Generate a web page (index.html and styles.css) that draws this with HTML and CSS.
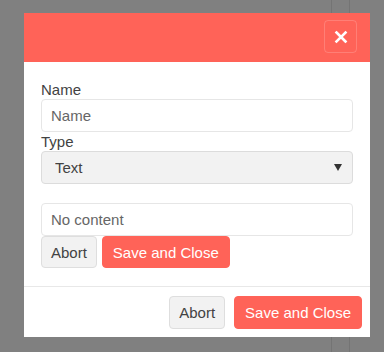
FILE: index.html
```html
<!DOCTYPE html>
<html lang="en">
<head>
  <meta charset="UTF-8" />
  <title>Edit field</title>
  <meta name="viewport" content="width=device-width, initial-scale=1.0"/>
  <link rel="stylesheet" href="styles.css">
</head>
<body>

<div class="backdrop">
  <div class="guide guide-a"></div>
  <div class="guide guide-b"></div>

  <div class="modal">
    <header class="modal-header">
      <button class="close-btn" aria-label="Close">
        <svg width="14" height="14" viewBox="0 0 14 14">
          <path d="M2.5 2.5 L11.5 11.5 M11.5 2.5 L2.5 11.5" stroke="#fff" stroke-width="2.6" stroke-linecap="square"/>
        </svg>
      </button>
    </header>

    <div class="modal-body">
      <label class="field-label" for="fieldName">Name</label>
      <input class="field-input" id="fieldName" placeholder="Name">

      <label class="field-label" for="fieldType">Type</label>
      <div class="select-wrap">
        <select class="field-select" id="fieldType">
          <option>Text</option>
        </select>
      </div>

      <input class="field-input content-input" placeholder="No content">
      <div class="inline-actions">
        <button class="btn btn-light">Abort</button>
        <button class="btn btn-primary">Save and Close</button>
      </div>
    </div>

    <footer class="modal-footer">
      <button class="btn btn-light">Abort</button>
      <button class="btn btn-primary">Save and Close</button>
    </footer>
  </div>
</div>

</body>
</html>
```

FILE: styles.css
```css
* {
  margin: 0;
  padding: 0;
  box-sizing: border-box;
  font-family: 'Liberation Sans', Arial, sans-serif;
}

body {
  background: #808080;
  color: #424242;
  font-size: 15px;
}

.backdrop {
  position: relative;
  height: 352px;
  padding: 13px 14px 0 24px;
}

.guide {
  position: absolute;
  top: 0;
  bottom: 0;
  width: 1px;
  background: #747474;
}

.guide-a { left: 331px; }
.guide-b { left: 349px; }

.modal {
  position: relative;
  background: #fff;
  width: 346px;
}

.modal-header {
  background: #ff6358;
  height: 49px;
  display: flex;
  justify-content: flex-end;
  align-items: flex-start;
  padding: 7px 13px 0 0;
}

.close-btn {
  width: 33px;
  height: 33px;
  border: 1px solid rgba(255, 255, 255, 0.18);
  border-radius: 4px;
  background: transparent;
  display: flex;
  align-items: center;
  justify-content: center;
}

.modal-body {
  padding: 18px 17px 18px 17px;
}

.field-label {
  display: block;
  line-height: 19px;
  height: 19px;
}

.field-input {
  display: block;
  width: 100%;
  height: 33px;
  border: 1px solid #e6e6e6;
  border-radius: 4px;
  padding: 0 9px;
  font-size: 15px;
  color: #424242;
  background: #fff;
  outline: none;
}

.field-input::placeholder {
  color: #666;
}

.select-wrap {
  position: relative;
}

.select-wrap::after {
  content: "";
  position: absolute;
  right: 11px;
  top: 13px;
  border-left: 4.5px solid transparent;
  border-right: 4.5px solid transparent;
  border-top: 7px solid #333;
  pointer-events: none;
}

.field-select {
  display: block;
  width: 100%;
  height: 33px;
  appearance: none;
  -webkit-appearance: none;
  border: 1px solid #dcdcdc;
  border-radius: 4px;
  background: #f2f2f2;
  padding: 0 13px;
  font-size: 15px;
  color: #424242;
}

.content-input {
  margin-top: 19px;
}

.inline-actions {
  display: flex;
  gap: 5px;
}

.btn {
  height: 32px;
  padding: 0 9px;
  border-radius: 4px;
  font-size: 15px;
  cursor: pointer;
}

.btn-light {
  background: #f2f2f2;
  border: 1px solid #dedede;
  color: #424242;
}

.btn-primary {
  background: #ff6358;
  border: 1px solid #ff6358;
  color: #fff;
  padding: 0 10px;
}

.modal-footer {
  border-top: 1px solid #e8e8e8;
  display: flex;
  justify-content: flex-end;
  gap: 9px;
  padding: 9px 8px 8px 8px;
}

.modal-footer .btn {
  height: 33px;
}
```
